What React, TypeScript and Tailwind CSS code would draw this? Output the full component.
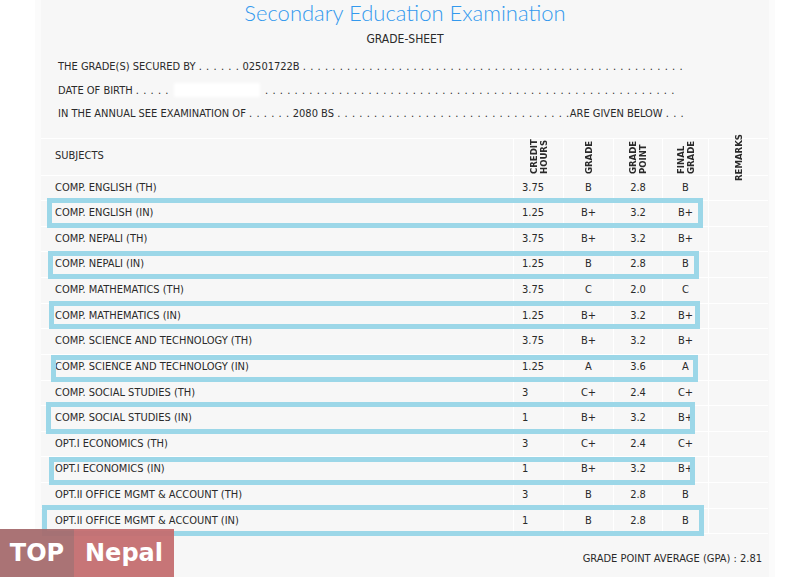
import React from "react";

// grade rows: subject, credit hours, grade, grade point, final grade
const rows = [
  ["COMP. ENGLISH (TH)", "3.75", "B", "2.8", "B"],
  ["COMP. ENGLISH (IN)", "1.25", "B+", "3.2", "B+"],
  ["COMP. NEPALI (TH)", "3.75", "B+", "3.2", "B+"],
  ["COMP. NEPALI (IN)", "1.25", "B", "2.8", "B"],
  ["COMP. MATHEMATICS (TH)", "3.75", "C", "2.0", "C"],
  ["COMP. MATHEMATICS (IN)", "1.25", "B+", "3.2", "B+"],
  ["COMP. SCIENCE AND TECHNOLOGY (TH)", "3.75", "B+", "3.2", "B+"],
  ["COMP. SCIENCE AND TECHNOLOGY (IN)", "1.25", "A", "3.6", "A"],
  ["COMP. SOCIAL STUDIES (TH)", "3", "C+", "2.4", "C+"],
  ["COMP. SOCIAL STUDIES (IN)", "1", "B+", "3.2", "B+"],
  ["OPT.I ECONOMICS (TH)", "3", "C+", "2.4", "C+"],
  ["OPT.I ECONOMICS (IN)", "1", "B+", "3.2", "B+"],
  ["OPT.II OFFICE MGMT & ACCOUNT (TH)", "3", "B", "2.8", "B"],
  ["OPT.II OFFICE MGMT & ACCOUNT (IN)", "1", "B", "2.8", "B"],
];

// hand-drawn highlight boxes around the internal (IN) rows
const marks = [
  "left-[47px] top-[198px] w-[656px] h-[30px]",
  "left-[48px] top-[251px] w-[651px] h-[28px]",
  "left-[49px] top-[301px] w-[651px] h-[28px]",
  "left-[51px] top-[355px] w-[647px] h-[27px]",
  "left-[46px] top-[402px] w-[649px] h-[32px]",
  "left-[49px] top-[457px] w-[646px] h-[28px]",
  "left-[42px] top-[505px] w-[662px] h-[31px]",
];

const dots = (n: number) => Array(n).fill(".").join(" ");

const cols = "grid grid-cols-[472px_50px_50px_49px_46px_60px]";

const VHead = ({ lines, center }: { lines: string[]; center?: boolean }) => (
  <div
    className={`border-l border-white flex justify-center overflow-visible ${center ? "items-center" : "items-end pb-[1px]"}`}
  >
    <span
      className={`[writing-mode:vertical-rl] rotate-180 font-bold text-[9.5px] leading-[10px] whitespace-nowrap ${center ? "h-[48px]" : "h-[34px]"}`}
    >
      {lines.map((l, i) => (
        <React.Fragment key={i}>
          {i > 0 && <br />}
          {l}
        </React.Fragment>
      ))}
    </span>
  </div>
);

export default function App() {
  return (
    <div className="relative w-[794px] h-[577px] bg-white overflow-hidden text-[#2a2a2a] font-['DejaVu_Sans_Condensed','DejaVu_Sans',sans-serif] font-stretch-condensed">
      <div className="ml-[35px] w-[740px] h-full bg-[#f7f7f7] border-x-[6px] border-[#fbfbfb]">
        <h1 className="text-center h-[26px] leading-[26px] text-[22px] font-light text-[#3399ee] font-['Lato',sans-serif]">
          Secondary Education Examination
        </h1>
        <div className="mt-[5px] text-center text-[12px] leading-[16px]">GRADE-SHEET</div>

        <div className="mt-[8px] pl-[17px] text-[11px] leading-[23.5px]">
          <div className="whitespace-pre">
            THE GRADE(S) SECURED BY <span className="tracking-[0.55px]">{dots(6)}</span> 02501722B{" "}
            <span className="tracking-[0.55px]">{dots(52)}</span>
          </div>
          <div className="whitespace-pre flex items-center">
            <span>DATE OF BIRTH </span>
            <span className="tracking-[0.55px]">{dots(5)}</span>
            <span className="inline-block w-[86px] h-[14px] mx-[5px] bg-white blur-[1.5px]" />
            <span className="tracking-[0.55px]">{dots(56)}</span>
          </div>
          <div className="whitespace-pre">
            IN THE ANNUAL SEE EXAMINATION OF <span className="tracking-[0.55px]">{dots(6)}</span> 2080 BS{" "}
            <span className="tracking-[0.55px]">{dots(32)}</span>ARE GIVEN BELOW{" "}
            <span className="tracking-[0.55px]">{dots(3)}</span>
          </div>
        </div>

        <div className="mt-[12px] w-[727px] text-[11px]">
          <div className={`${cols} grid-rows-[36px] h-[38px] border-y border-white`}>
            <div className="flex items-center pl-[14px]">SUBJECTS</div>
            <VHead lines={["CREDIT", "HOURS"]} />
            <VHead lines={["GRADE"]} />
            <VHead lines={["GRADE", "POINT"]} />
            <VHead lines={["FINAL", "GRADE"]} />
            <VHead lines={["REMARKS"]} center />
          </div>
          {rows.map((r, i) => (
            <div key={i} className={`${cols} h-[25.64px] border-b border-white`}>
              <div className="flex items-center pl-[14px] whitespace-nowrap">{r[0]}</div>
              <div className="flex items-center pl-[8px] border-l border-white">{r[1]}</div>
              <div className="flex items-center justify-center border-l border-white">{r[2]}</div>
              <div className="flex items-center justify-center border-l border-white">{r[3]}</div>
              <div className="flex items-center justify-center border-l border-white">{r[4]}</div>
              <div className="border-l border-white" />
            </div>
          ))}
        </div>

        <div className="mt-[17px] w-[727px] pr-[6px] text-right text-[11px] leading-[16px]">
          GRADE POINT AVERAGE (GPA) : 2.81
        </div>
      </div>

      {marks.map((m, i) => (
        <div key={i} className={`absolute ${m} border-[5px] border-[#9cd7e8]`} />
      ))}

      <div className="absolute left-0 bottom-0 flex h-[48px] font-['DejaVu_Sans',sans-serif] font-bold text-[24px] text-white font-stretch-normal">
        <div className="w-[74px] flex items-center justify-center bg-[#a56b6e]/95">TOP</div>
        <div className="w-[100px] flex items-center justify-center bg-[#c46e70]/95">Nepal</div>
      </div>
    </div>
  );
}
